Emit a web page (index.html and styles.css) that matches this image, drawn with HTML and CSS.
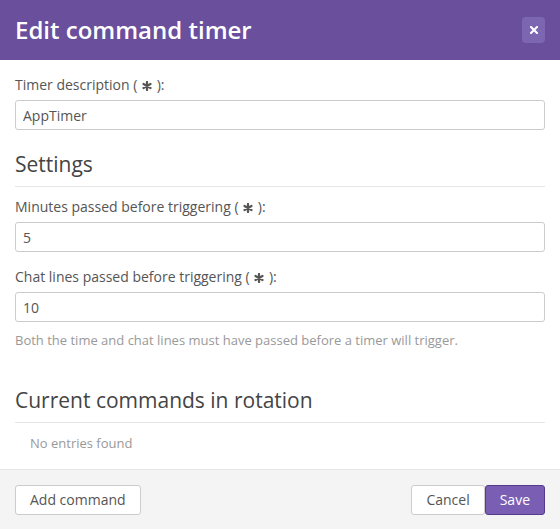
FILE: index.html
```html
<!DOCTYPE html>
<html>
<head>
<meta charset="utf-8">
<link rel="stylesheet" href="styles.css">
</head>
<body>
<div class="modal">
  <header class="modal-header">
    <h2 class="modal-title">Edit command timer</h2>
    <button class="close" aria-label="Close"><svg width="8" height="8" viewBox="0 0 8 8"><path d="M1 1L7 7M7 1L1 7" stroke="#fff" stroke-width="2" stroke-linecap="square"/></svg></button>
  </header>
  <div class="modal-body">
    <div class="form-group">
      <label class="label">Timer description ( <svg class="req" width="10" height="10" viewBox="0 0 10 10"><g stroke="#555" stroke-width="2.2" stroke-linecap="round"><path d="M5 1v8M1.5 3l7 4M1.5 7l7-4"/></g></svg> ):</label>
      <input class="input" type="text" value="AppTimer" readonly>
    </div>
    <h3 class="section-title">Settings</h3>
    <div class="form-group">
      <label class="label">Minutes passed before triggering ( <svg class="req" width="10" height="10" viewBox="0 0 10 10"><g stroke="#555" stroke-width="2.2" stroke-linecap="round"><path d="M5 1v8M1.5 3l7 4M1.5 7l7-4"/></g></svg> ):</label>
      <input class="input" type="text" value="5" readonly>
    </div>
    <div class="form-group last">
      <label class="label">Chat lines passed before triggering ( <svg class="req" width="10" height="10" viewBox="0 0 10 10"><g stroke="#555" stroke-width="2.2" stroke-linecap="round"><path d="M5 1v8M1.5 3l7 4M1.5 7l7-4"/></g></svg> ):</label>
      <input class="input" type="text" value="10" readonly>
      <p class="help">Both the time and chat lines must have passed before a timer will trigger.</p>
    </div>
    <h3 class="section-title commands">Current commands in rotation</h3>
    <p class="empty">No entries found</p>
  </div>
  <footer class="modal-footer">
    <button class="btn">Add command</button>
    <div class="actions">
      <button class="btn">Cancel</button>
      <button class="btn primary">Save</button>
    </div>
  </footer>
</div>
</body>
</html>
```

FILE: styles.css
```css
* { box-sizing: border-box; }
html, body { margin: 0; padding: 0; background: #fff; }
body {
  font-family: "Open Sans", "Noto Sans", sans-serif;
  font-size: 14px;
  line-height: 20px;
  color: #555;
}
.modal {
  width: 560px;
  height: 529px;
  display: flex;
  flex-direction: column;
}
.modal-header {
  height: 60px;
  background: #694f9c;
  display: flex;
  align-items: center;
  justify-content: space-between;
  padding: 0 15px;
}
.modal-title {
  margin: 0;
  color: #fff;
  font-size: 24px;
  font-weight: 600;
  line-height: 30px;
}
.close {
  width: 23px;
  height: 26px;
  border: 0;
  border-radius: 4px;
  background: #7d66b1;
  display: flex;
  align-items: center;
  justify-content: center;
  padding: 0;
}
.modal-body {
  flex: 1;
  padding: 15px 15px 0;
}
.form-group { margin-bottom: 15px; }
.form-group.last { margin-bottom: 0; }
.label {
  display: block;
  margin-bottom: 5px;
  color: #555;
}
.req { vertical-align: -1px; margin: 0 1px; }
.input {
  display: block;
  width: 100%;
  height: 30px;
  border: 1px solid #ccc;
  border-radius: 3px;
  padding: 0 7px;
  font: inherit;
  color: #555;
  background: #fff;
  outline: none;
}
.section-title {
  margin: 23px 0 10px;
  padding-bottom: 10px;
  border-bottom: 1px solid #e5e5e5;
  font-size: 21px;
  font-weight: 400;
  line-height: 23px;
  color: #444;
}
.section-title.commands { margin-top: 39px; }
.help {
  margin: 8px 0 0;
  font-size: 13px;
  color: #999;
}
.empty {
  margin: 0;
  padding: 0 15px;
  font-size: 13px;
  color: #999;
}
.modal-footer {
  height: 60px;
  border-top: 1px solid #e5e5e5;
  background: #f4f4f4;
  display: flex;
  align-items: center;
  justify-content: space-between;
  padding: 0 15px;
}
.actions { display: flex; }
.btn {
  height: 30px;
  padding: 0 14px;
  border: 1px solid #ccc;
  border-radius: 3px;
  background: #fff;
  font: inherit;
  color: #555;
}
.btn.primary {
  background: #7a5eb4;
  border-color: #563b8b;
  color: #fff;
}
```
